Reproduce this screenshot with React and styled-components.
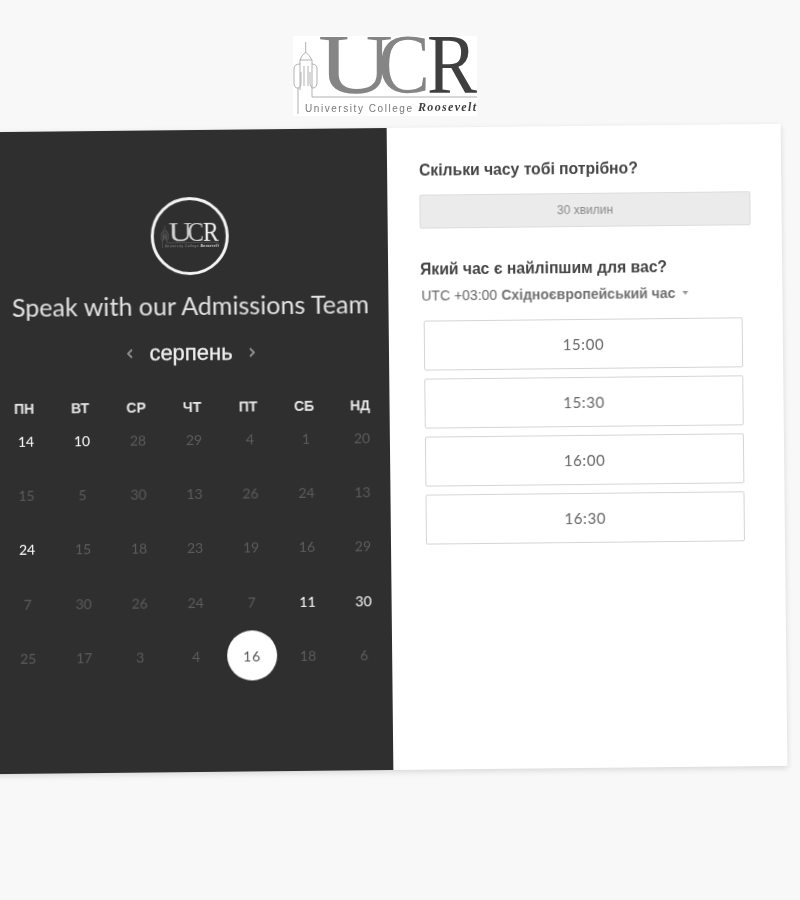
import React from "react";
import styled, { createGlobalStyle } from "styled-components";

const GlobalStyle = createGlobalStyle`
  html, body {
    margin: 0;
    padding: 0;
    background: #f8f8f8;
  }
`;

const Page = styled.div`
  width: 800px;
  height: 900px;
  overflow: hidden;
  font-family: "Liberation Sans", Arial, sans-serif;
`;

const Header = styled.header`
  height: 128px;
  padding: 36px 0 0 293px;
  box-sizing: border-box;
`;

const LogoBox = styled.div`
  width: 184px;
  height: 80px;
  background: #fff;
  filter: blur(0.5px);
`;

const Card = styled.main`
  display: flex;
  width: 790px;
  height: 642px;
  margin-left: -6px;
  transform: rotate(-0.6deg);
  filter: grayscale(1) blur(0.2px);
  background: #fff;
  box-shadow: 0 2px 6px rgba(0, 0, 0, 0.14);
`;

const LeftPanel = styled.section`
  display: flex;
  flex-direction: column;
  align-items: center;
  width: 396px;
  padding-top: 67px;
  box-sizing: border-box;
  background: #2f2f2f;
`;

const Badge = styled.div`
  display: flex;
  align-items: center;
  justify-content: center;
  width: 78px;
  height: 78px;
  box-sizing: border-box;
  border: 3px solid #f4f4f4;
  border-radius: 50%;
`;

const BadgeLogo = styled.div`
  width: 58px;
  height: 26px;
  filter: blur(0.3px);
`;

const Title = styled.h1`
  margin: 14px 0 0;
  font-family: Lato, sans-serif;
  font-size: 25px;
  line-height: 32px;
  font-weight: 400;
  letter-spacing: 0.03px;
  color: #e2e2e2;
  white-space: nowrap;
`;

const MonthRow = styled.div`
  display: flex;
  align-items: center;
  gap: 15px;
  height: 30px;
  margin-top: 17px;
`;

const Month = styled.span`
  width: 84px;
  text-align: center;
  font-size: 22px;
  color: #ececec;
  -webkit-text-stroke: 0.3px #ececec;
`;

const Calendar = styled.div`
  display: grid;
  grid-template-columns: repeat(7, 56px);
  grid-template-rows: 10px;
  grid-auto-rows: 54.3px;
  margin: 34px 0 0 1px;
`;

const Weekday = styled.div`
  line-height: 10px;
  text-align: center;
  font-size: 14px;
  font-weight: 700;
  color: #e8e8e8;
`;

const Day = styled.div`
  display: flex;
  align-items: center;
  justify-content: center;
  padding-left: 3px;
  font-family: Lato, sans-serif;
  font-size: 14px;
  color: ${(p) => (p.$active ? "#fff" : "#5c5c5c")};
`;

const SelectedDay = styled.span`
  display: flex;
  align-items: center;
  justify-content: center;
  flex: none;
  width: 50px;
  height: 50px;
  border-radius: 50%;
  background: #fff;
  color: #555;
  letter-spacing: 1px;
`;

const RightPanel = styled.section`
  flex: 1;
  padding: 33px 0 0 32px;
  box-sizing: border-box;
  background: #fff;
`;

const Question = styled.h2`
  margin: 0;
  font-size: 15.7px;
  line-height: 20px;
  font-weight: 700;
  color: #444;
`;

const Duration = styled.div`
  width: 331px;
  height: 34px;
  margin: 14px 0 31px;
  box-sizing: border-box;
  border: 1px solid #dcdcdc;
  border-radius: 2px;
  background: #ebebeb;
  text-align: center;
  font-size: 12px;
  line-height: 33px;
  color: #8a8a8a;
`;

const Zone = styled.div`
  display: flex;
  align-items: center;
  gap: 4px;
  margin: 7px 0 16px 1px;
  font-size: 14px;
  line-height: 18px;
  color: #666;
`;

const ZoneName = styled.b`
  color: #707070;
`;

const Caret = styled.i`
  width: 0;
  height: 0;
  margin-left: 3px;
  border: 3.5px solid transparent;
  border-top: 4px solid #999;
  border-bottom: 0;
`;

const Slots = styled.div`
  display: flex;
  flex-direction: column;
  gap: 8px;
  width: 319px;
  margin-left: 3px;
`;

const Slot = styled.button`
  height: 50px;
  padding: 0;
  border: 1px solid #d4d4d4;
  border-radius: 2px;
  background: #fff;
  font-family: Lato, sans-serif;
  font-size: 15px;
  letter-spacing: 0.6px;
  color: #666;
`;

const weekdays = ["ПН", "ВТ", "СР", "ЧТ", "ПТ", "СБ", "НД"];

const days = [
  14, 10, 28, 29, 4, 1, 20,
  15, 5, 30, 13, 26, 24, 13,
  24, 15, 18, 23, 19, 16, 29,
  7, 30, 26, 24, 7, 11, 30,
  25, 17, 3, 4, 16, 18, 6,
];
// positions in the list above which are bookable (bright)
const activeDays = [0, 1, 14, 26, 27];
const selectedDay = 32;

const times = ["15:00", "15:30", "16:00", "16:30"];

const UcrLogo = ({ main, dark, line, caption }) => (
  <svg viewBox="0 0 184 80" width="100%" height="100%">
    <g fill="none" stroke={line} strokeWidth="0.9">
      <path d="M12.7 6V16M12.7 16Q8 20 7 24V54M12.7 16Q17 20 19 24V61H184" />
      <path d="M7 28Q1 28 1 33V47Q1 52 5 52Q8 52 8 47V36" />
      <path d="M19 28Q24 28 24 33V47Q24 51 21 52Q17 52 17 47V36" />
      <path d="M11 30V50M15 30V50M7 24H19" />
      <path d="M5 52V78" />
    </g>
    <g fontFamily="'Liberation Serif', serif" fontSize="84">
      <text x="25" y="57" fill={main} textLength="75" lengthAdjust="spacingAndGlyphs">U</text>
      <text x="85" y="57" fill={main} textLength="52" lengthAdjust="spacingAndGlyphs">C</text>
      <text x="134" y="57" fill={dark} textLength="50" lengthAdjust="spacingAndGlyphs">R</text>
    </g>
    <text x="12" y="76" fill={caption} fontFamily="'Liberation Sans', sans-serif" fontSize="10" textLength="107">
      University College
    </text>
    <text x="125" y="75" fill={dark} fontFamily="'Liberation Serif', serif" fontSize="12" fontWeight="700" fontStyle="italic" textLength="58">
      Roosevelt
    </text>
  </svg>
);

const Chevron = ({ flip }) => (
  <svg width="8" height="12" viewBox="0 0 8 12" fill="none" stroke="#8f8f8f" strokeWidth="1.8">
    <path d={flip ? "M2 2L6 6L2 10" : "M6 2L2 6L6 10"} />
  </svg>
);

const App = () => (
  <Page>
    <GlobalStyle />
    <Header>
      <LogoBox>
        <UcrLogo main="#858585" dark="#3f3f3f" line="#a8a8a8" caption="#777" />
      </LogoBox>
    </Header>
    <Card>
      <LeftPanel>
        <Badge>
          <BadgeLogo>
            <UcrLogo main="#d0d0d0" dark="#f0f0f0" line="#999" caption="#999" />
          </BadgeLogo>
        </Badge>
        <Title>Speak with our Admissions Team</Title>
        <MonthRow>
          <Chevron />
          <Month>серпень</Month>
          <Chevron flip />
        </MonthRow>
        <Calendar>
          {weekdays.map((w) => (
            <Weekday key={w}>{w}</Weekday>
          ))}
          {days.map((d, i) => (
            <Day key={i} $active={activeDays.includes(i)}>
              {i === selectedDay ? <SelectedDay>{d}</SelectedDay> : d}
            </Day>
          ))}
        </Calendar>
      </LeftPanel>
      <RightPanel>
        <Question>Скільки часу тобі потрібно?</Question>
        <Duration>30 хвилин</Duration>
        <Question>Який час є найліпшим для вас?</Question>
        <Zone>
          UTC +03:00 <ZoneName>Східноєвропейський час</ZoneName>
          <Caret />
        </Zone>
        <Slots>
          {times.map((t) => (
            <Slot key={t}>{t}</Slot>
          ))}
        </Slots>
      </RightPanel>
    </Card>
  </Page>
);

export default App;
